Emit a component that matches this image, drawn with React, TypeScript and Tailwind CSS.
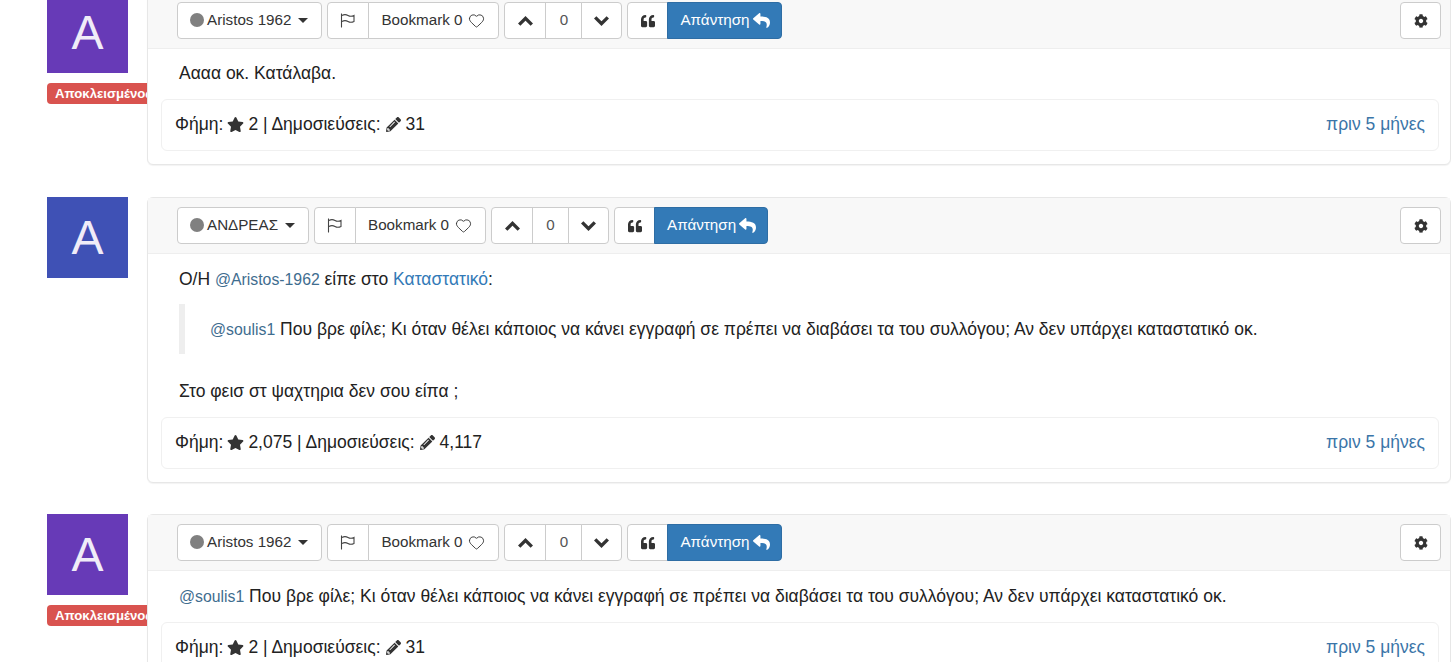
import { Heart } from "lucide-react";
import { FaCog, FaPencilAlt, FaQuoteLeft, FaReply, FaStar } from "react-icons/fa";

type Post = {
  letter: string;
  color: string;
  name: string;
  banned: boolean;
  reputation: string;
  posts: string;
  body: React.ReactNode;
};

const mention = "text-[15.8px] text-[#3f6d8f]";

const posts: Post[] = [
  {
    letter: "A",
    color: "bg-[#673ab7]",
    name: "Aristos 1962",
    banned: true,
    reputation: "2",
    posts: "31",
    body: <p className="mb-[14px] h-[23px] leading-[23px]">Αααα οκ. Κατάλαβα.</p>,
  },
  {
    letter: "A",
    color: "bg-[#3f51b5]",
    name: "ΑΝΔΡΕΑΣ",
    banned: false,
    reputation: "2,075",
    posts: "4,117",
    body: (
      <>
        <p className="mt-px h-[23px] leading-[23px]">
          Ο/Η <span className={mention}>@Aristos-1962</span> είπε στο <span className="text-[#337ab7]">Καταστατικό</span>:
        </p>
        <blockquote className="mt-[13px] flex h-[50px] items-center border-l-[6px] border-[#eeeeee] pl-[25px]">
          <p>
            <span className={mention}>@soulis1</span> Που βρε φίλε; Κι όταν θέλει κάποιος να κάνει εγγραφή σε πρέπει να διαβάσει τα του συλλόγου; Αν δεν υπάρχει καταστατικό οκ.
          </p>
        </blockquote>
        <p className="mt-[26px] mb-[14px] h-[23px] leading-[23px]">Στο φεισ στ ψαχτηρια δεν σου είπα ;</p>
      </>
    ),
  },
  {
    letter: "A",
    color: "bg-[#673ab7]",
    name: "Aristos 1962",
    banned: true,
    reputation: "2",
    posts: "31",
    body: (
      <p className="mt-px mb-[14px] h-[23px] leading-[23px]">
        <span className={mention}>@soulis1</span> Που βρε φίλε; Κι όταν θέλει κάποιος να κάνει εγγραφή σε πρέπει να διαβάσει τα του συλλόγου; Αν δεν υπάρχει καταστατικό οκ.
      </p>
    ),
  },
];

function FlagIcon() {
  return (
    <svg width="16" height="15" viewBox="0 0 16 15" fill="none" stroke="#444" strokeWidth="1.1">
      <path d="M1.5 0.5v14" />
      <path d="M2 2.5c2-1.2 4-1.2 6 0s4 1 6 0v6c-2 1-4 1.2-6 0s-4-1.2-6 0" />
    </svg>
  );
}

function Chevron({ up }: { up: boolean }) {
  return (
    <svg width="15" height="10" viewBox="0 0 15 10" fill="none" stroke="#333" strokeWidth="3.4">
      <path d={up ? "M1.2 8.6 7.5 2.4l6.3 6.2" : "M1.2 1.4l6.3 6.2 6.3-6.2"} />
    </svg>
  );
}

function Btn({ className = "", children }: { className?: string; children: React.ReactNode }) {
  return (
    <button
      type="button"
      className={`flex h-[37px] items-center justify-center border border-[#cccccc] bg-white text-[15.2px] text-[#333333] ${className}`}
    >
      {children}
    </button>
  );
}

function PostRow({ post }: { post: Post }) {
  return (
    <div className="flex items-start pl-[47px] first:mb-px">
      <div className="w-[100px] shrink-0">
        <div className={`flex h-[81px] w-[81px] items-center justify-center text-[48px] leading-none text-[#f0ecf8] ${post.color}`}>
          {post.letter}
        </div>
        {post.banned ? (
          <div className="mt-[10px] h-[21px] w-[110px] overflow-hidden whitespace-nowrap rounded-[4px] bg-[#d9534f] pl-[8px] text-[13.2px] font-bold leading-[21px] text-white">
            Αποκλεισμένος
          </div>
        ) : null}
      </div>
      <div className="relative z-10 flex-1 rounded-[6px] border border-[#e7e7e7] bg-white shadow-[0_1px_1px_rgba(0,0,0,0.05)]">
        <div className="flex h-[56px] items-start justify-between border-b border-[#eeeeee] bg-[#f8f8f8] pl-[29px] pr-[9px] pt-[9px]">
          <div className="flex gap-[5px]">
            <Btn className="gap-[7px] rounded-[4px] pl-[12px] pr-[13px]">
              <span className="flex items-center gap-[3px]">
                <span className="h-[14px] w-[14px] rounded-full bg-[#808080]" />
                {post.name}
              </span>
              <span className="h-0 w-0 border-x-[5.5px] border-t-[5.5px] border-x-transparent border-t-[#333333]" />
            </Btn>
            <div className="flex">
              <Btn className="w-[42px] rounded-l-[4px]">
                <FlagIcon />
              </Btn>
              <Btn className="-ml-px gap-[6px] rounded-r-[4px] pl-[12px] pr-[13px]">
                Bookmark 0 <Heart size={17} strokeWidth={1.3} />
              </Btn>
            </div>
            <div className="flex">
              <Btn className="w-[42px] rounded-l-[4px]">
                <Chevron up />
              </Btn>
              <Btn className="-ml-px w-[37px] text-[#555555]">0</Btn>
              <Btn className="-ml-px w-[41px] rounded-r-[4px]">
                <Chevron up={false} />
              </Btn>
            </div>
            <div className="flex">
              <Btn className="w-[41px] rounded-l-[4px]">
                <FaQuoteLeft className="text-[14px]" />
              </Btn>
              <button
                type="button"
                className="-ml-px flex h-[37px] items-center gap-[3px] rounded-r-[4px] border border-[#2e6da4] bg-[#337ab7] pl-[12px] pr-[11px] text-[15.2px] text-white"
              >
                Απάντηση <FaReply className="text-[17px]" />
              </button>
            </div>
          </div>
          <Btn className="w-[41px] rounded-[4px]">
            <FaCog className="text-[14px]" />
          </Btn>
        </div>
        <div className="px-[31px] pt-[13px] text-[17.5px] text-[#222222]">{post.body}</div>
        <div className="mb-[13px] ml-[13px] mr-[11px] flex h-[52px] items-center justify-between rounded-[6px] border border-[#f0f0f0] px-[13px] pb-px text-[17.5px] text-[#222222]">
          <div className="flex items-center">
            <span>Φήμη:</span>
            <FaStar className="mx-[4px] text-[17px] text-[#333333]" />
            <span>{post.reputation} | Δημοσιεύσεις:</span>
            <FaPencilAlt className="mx-[5px] text-[15px] text-[#333333]" />
            <span>{post.posts}</span>
          </div>
          <span className="text-[#3b75a8]">πριν 5 μήνες</span>
        </div>
      </div>
    </div>
  );
}

export default function App() {
  return (
    <div className="h-[662px] w-full overflow-hidden bg-white font-['Liberation_Sans',Arial,sans-serif]">
      <div className="-mt-[8px] flex flex-col gap-[31px]">
        {posts.map((post, index) => (
          <PostRow key={index} post={post} />
        ))}
      </div>
    </div>
  );
}
